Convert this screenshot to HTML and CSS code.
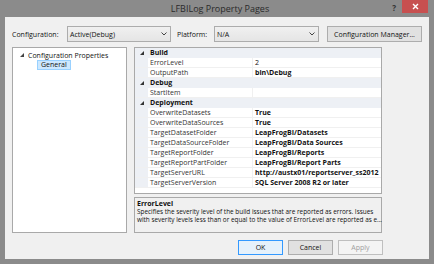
FILE: index.html
```html
<!DOCTYPE html>
<html>
<head>
<meta charset="utf-8">
<link rel="stylesheet" href="styles.css">
</head>
<body>
<div class="window">
  <div class="titlebar">
    <div class="title">LFBILog Property Pages</div>
    <div class="controls">
      <span class="help">?</span>
      <span class="close"><svg width="7" height="7" viewBox="0 0 7 7"><path d="M1 1L6 6M6 1L1 6" stroke="#fff" stroke-width="1.4"/></svg></span>
    </div>
  </div>
  <div class="client">
    <div class="toprow">
      <span class="lbl lbl-config">Configuration:</span>
      <div class="combo combo-config"><span>Active(Debug)</span><svg class="chev" width="6" height="4" viewBox="0 0 6 4"><path d="M0.5 0.5L3 3L5.5 0.5" fill="none" stroke="#444" stroke-width="1"/></svg></div>
      <span class="lbl lbl-plat">Platform:</span>
      <div class="combo combo-plat"><span>N/A</span><svg class="chev" width="6" height="4" viewBox="0 0 6 4"><path d="M0.5 0.5L3 3L5.5 0.5" fill="none" stroke="#444" stroke-width="1"/></svg></div>
      <button class="btn btn-cm">Configuration Manager...</button>
    </div>
    <div class="main">
      <div class="tree">
        <div class="tnode"><svg class="tri" width="4" height="4" viewBox="0 0 4 4"><path d="M4 0L4 4L0 4Z" fill="#444"/></svg><span>Configuration Properties</span></div>
        <div class="tchild"><span class="sel">General</span></div>
      </div>
      <div class="rightcol">
        <div class="grid">
          <div class="row cat"><div class="m"><svg width="4" height="4" viewBox="0 0 4 4"><path d="M4 0L4 4L0 4Z" fill="#333"/></svg></div><div class="n">Build</div><div class="v"></div></div>
          <div class="row"><div class="m"></div><div class="n">ErrorLevel</div><div class="v">2</div></div>
          <div class="row"><div class="m"></div><div class="n">OutputPath</div><div class="v b">bin\Debug</div></div>
          <div class="row cat"><div class="m"><svg width="4" height="4" viewBox="0 0 4 4"><path d="M4 0L4 4L0 4Z" fill="#333"/></svg></div><div class="n">Debug</div><div class="v"></div></div>
          <div class="row"><div class="m"></div><div class="n">StartItem</div><div class="v"></div></div>
          <div class="row cat"><div class="m"><svg width="4" height="4" viewBox="0 0 4 4"><path d="M4 0L4 4L0 4Z" fill="#333"/></svg></div><div class="n">Deployment</div><div class="v"></div></div>
          <div class="row"><div class="m"></div><div class="n">OverwriteDatasets</div><div class="v b">True</div></div>
          <div class="row"><div class="m"></div><div class="n">OverwriteDataSources</div><div class="v b">True</div></div>
          <div class="row"><div class="m"></div><div class="n">TargetDatasetFolder</div><div class="v b">LeapFrogBI/Datasets</div></div>
          <div class="row"><div class="m"></div><div class="n">TargetDataSourceFolder</div><div class="v b">LeapFrogBI/Data Sources</div></div>
          <div class="row"><div class="m"></div><div class="n">TargetReportFolder</div><div class="v b">LeapFrogBI/Reports</div></div>
          <div class="row"><div class="m"></div><div class="n">TargetReportPartFolder</div><div class="v b">LeapFrogBI/Report Parts</div></div>
          <div class="row"><div class="m"></div><div class="n">TargetServerURL</div><div class="v b">http://austx01/reportserver_ss2012</div></div>
          <div class="row"><div class="m"></div><div class="n">TargetServerVersion</div><div class="v b">SQL Server 2008 R2 or later</div></div>
        </div>
        <div class="desc">
          <div class="dtitle">ErrorLevel</div>
          <div class="dtext">Specifies the severity level of the build issues that are reported as errors. Issues<br>with severity levels less than or equal to the value of ErrorLevel are reported as e...</div>
        </div>
      </div>
    </div>
    <div class="buttons">
      <button class="btn btn-ok">OK</button>
      <button class="btn">Cancel</button>
      <button class="btn btn-dis">Apply</button>
    </div>
  </div>
</div>
</body>
</html>
```

FILE: styles.css
```css
html, body {
  margin: 0;
  padding: 0;
}
body {
  width: 434px;
  height: 264px;
  overflow: hidden;
  font-family: "Open Sans", "Noto Sans", sans-serif;
  font-size: 7px;
  color: #111;
}
.window {
  width: 434px;
  height: 264px;
  background: #8b8b8b;
  box-sizing: border-box;
  padding: 0 5px 5px 5px;
  display: flex;
  flex-direction: column;
}
.titlebar {
  height: 17px;
  position: relative;
  display: flex;
  justify-content: center;
  align-items: center;
}
.title {
  font-size: 9px;
  color: #2a2a2a;
  margin-left: 6px;
}
.controls {
  position: absolute;
  right: 1px;
  top: 0;
  display: flex;
  align-items: flex-start;
}
.help {
  font-size: 8px;
  font-weight: bold;
  color: #333;
  margin-right: 6px;
  margin-top: 2px;
}
.close {
  width: 26px;
  height: 13px;
  background: #c75050;
  display: flex;
  align-items: center;
  justify-content: center;
}
.client {
  flex: 1;
  background: #f0f0f0;
  display: flex;
  flex-direction: column;
  padding: 9px 0 0 7px;
}
.toprow {
  display: flex;
  align-items: center;
  height: 16px;
}
.lbl {
  white-space: nowrap;
}
.lbl-config {
  width: 55px;
}
.lbl-plat {
  width: 37px;
  margin-left: 6px;
}
.combo {
  height: 16px;
  box-sizing: border-box;
  border: 1px solid #acacac;
  background: linear-gradient(#f0f0f0, #e5e5e5);
  display: flex;
  align-items: center;
  justify-content: space-between;
  padding: 0 3px 0 2px;
}
.combo-config {
  width: 104px;
}
.combo-plat {
  width: 105px;
}
.btn {
  font-family: inherit;
  font-size: 7px;
  color: #111;
  height: 15px;
  box-sizing: border-box;
  border: 1px solid #adadad;
  background: #e1e1e1;
  padding: 0;
  margin: 0;
}
.btn-cm {
  width: 95px;
  margin-left: 8px;
  height: 16px;
}
.main {
  display: flex;
  margin-top: 5px;
  height: 186px;
}
.tree {
  width: 115px;
  box-sizing: border-box;
  border: 1px solid #a9a9a9;
  background: #fff;
  padding-top: 2px;
}
.tnode {
  display: flex;
  align-items: center;
  height: 10px;
}
.tnode .tri {
  margin-left: 7px;
  margin-right: 4px;
}
.tchild {
  height: 10px;
  padding-left: 24px;
  display: flex;
  align-items: center;
}
.sel {
  background: #cce8ff;
  border: 1px solid #99d1ff;
  padding: 0 3px;
  line-height: 8px;
}
.rightcol {
  width: 248px;
  margin-left: 7px;
  display: flex;
  flex-direction: column;
}
.grid {
  height: 147px;
  box-sizing: border-box;
  border: 1px solid #a9a9a9;
  background: #fff;
}
.row {
  display: grid;
  grid-template-columns: 13px 105px 1fr;
  height: 10px;
  box-sizing: border-box;
  border-bottom: 1px solid #f0f0f0;
}
.row .m {
  background: #edf0f5;
  display: flex;
  align-items: center;
  justify-content: center;
}
.row .n {
  padding-left: 2px;
  line-height: 9px;
  white-space: nowrap;
  overflow: hidden;
  color: #333;
  border-right: 1px solid #f0f0f0;
}
.row .v {
  padding-left: 2px;
  line-height: 9px;
  white-space: nowrap;
  overflow: hidden;
}
.row.cat {
  background: #edf0f5;
  border-bottom-color: #edf0f5;
}
.row.cat .n {
  font-weight: bold;
  border-right: none;
  color: #111;
}
.b {
  font-weight: bold;
}
.desc {
  margin-top: 3px;
  height: 36px;
  box-sizing: border-box;
  border: 1px solid #a9a9a9;
  background: #f0f0f0;
  padding: 1px 2px;
}
.dtitle {
  font-weight: bold;
  line-height: 9px;
}
.dtext {
  line-height: 8px;
  font-size: 6.4px;
  white-space: nowrap;
}
.buttons {
  display: flex;
  margin-top: 7px;
  padding-left: 226px;
  gap: 5px;
}
.buttons .btn {
  width: 45px;
}
.btn-ok {
  border-color: #3399ff;
  background: #e5f1fb;
}
.btn-dis {
  background: #f4f4f4;
  border-color: #bfbfbf;
  color: #a0a0a0;
}
```
